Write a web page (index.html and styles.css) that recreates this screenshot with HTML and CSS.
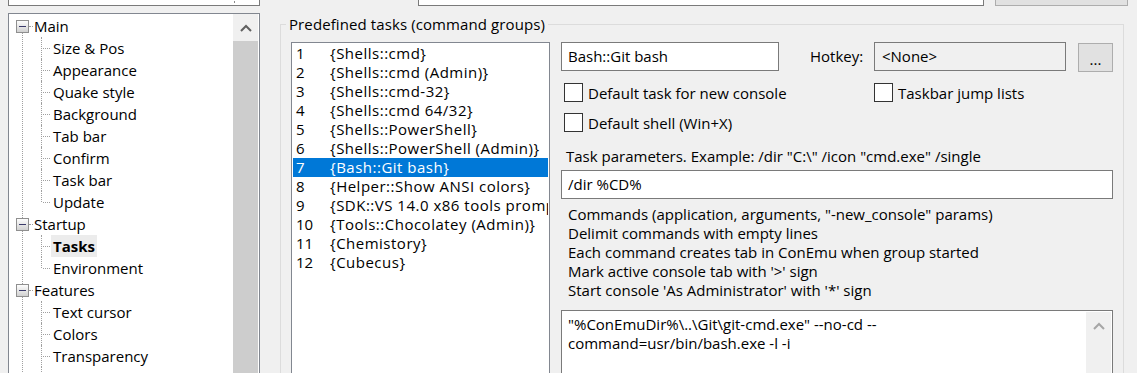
FILE: index.html
```html
<!DOCTYPE html>
<html lang="en">
<head>
    <meta charset="UTF-8">
    <title>Settings - Tasks</title>
    <link rel="stylesheet" href="styles.css">
</head>
<body>
    <div class="top">
        <div class="combo"><span class="combo-arrow"></span></div>
        <div class="search"></div>
        <div class="top-btn"></div>
    </div>

    <div class="main">
        <!-- settings tree -->
        <div class="tree">
            <ul class="roots">
                <li>
                    <div class="node">
                        <svg class="exp" width="13" height="13" viewBox="0 0 13 13">
                            <defs>
                                <linearGradient id="eg" x1="0" y1="0" x2="0" y2="1">
                                    <stop offset="0" stop-color="#ffffff"/>
                                    <stop offset="1" stop-color="#cfcfcf"/>
                                </linearGradient>
                            </defs>
                            <rect x="0.5" y="0.5" width="12" height="12" fill="url(#eg)" stroke="#8f8f8f"/>
                            <line x1="3" y1="6.5" x2="10" y2="6.5" stroke="#3a3a6a"/>
                        </svg>
                        <span class="label">Main</span>
                    </div>
                    <ul class="kids">
                        <li><span class="label">Size &amp; Pos</span></li>
                        <li><span class="label">Appearance</span></li>
                        <li><span class="label">Quake style</span></li>
                        <li><span class="label">Background</span></li>
                        <li><span class="label">Tab bar</span></li>
                        <li><span class="label">Confirm</span></li>
                        <li><span class="label">Task bar</span></li>
                        <li><span class="label">Update</span></li>
                    </ul>
                </li>
                <li>
                    <div class="node">
                        <svg class="exp" width="13" height="13" viewBox="0 0 13 13">
                            <rect x="0.5" y="0.5" width="12" height="12" fill="url(#eg)" stroke="#8f8f8f"/>
                            <line x1="3" y1="6.5" x2="10" y2="6.5" stroke="#3a3a6a"/>
                        </svg>
                        <span class="label">Startup</span>
                    </div>
                    <ul class="kids">
                        <li><span class="label current">Tasks</span></li>
                        <li><span class="label">Environment</span></li>
                    </ul>
                </li>
                <li>
                    <div class="node">
                        <svg class="exp" width="13" height="13" viewBox="0 0 13 13">
                            <rect x="0.5" y="0.5" width="12" height="12" fill="url(#eg)" stroke="#8f8f8f"/>
                            <line x1="3" y1="6.5" x2="10" y2="6.5" stroke="#3a3a6a"/>
                        </svg>
                        <span class="label">Features</span>
                    </div>
                    <ul class="kids">
                        <li><span class="label">Text cursor</span></li>
                        <li><span class="label">Colors</span></li>
                        <li><span class="label">Transparency</span></li>
                        <li><span class="label">Status bar</span></li>
                    </ul>
                </li>
            </ul>
            <div class="vscroll">
                <div class="vs-btn">
                    <svg width="12" height="8" viewBox="0 0 12 8"><path d="M1 7 L6 2 L11 7" fill="none" stroke="#606060" stroke-width="2"/></svg>
                </div>
                <div class="vs-thumb"></div>
            </div>
        </div>

        <!-- tasks page -->
        <fieldset class="group">
            <legend>Predefined tasks (command groups)</legend>
            <div class="tasks">
                <div class="list">
                    <div class="row"><span class="num">1</span>{Shells::cmd}</div>
                    <div class="row"><span class="num">2</span>{Shells::cmd (Admin)}</div>
                    <div class="row"><span class="num">3</span>{Shells::cmd-32}</div>
                    <div class="row"><span class="num">4</span>{Shells::cmd 64/32}</div>
                    <div class="row"><span class="num">5</span>{Shells::PowerShell}</div>
                    <div class="row"><span class="num">6</span>{Shells::PowerShell (Admin)}</div>
                    <div class="row selected"><span class="num">7</span>{Bash::Git bash}</div>
                    <div class="row"><span class="num">8</span>{Helper::Show ANSI colors}</div>
                    <div class="row"><span class="num">9</span>{SDK::VS 14.0 x86 tools prompt}</div>
                    <div class="row"><span class="num">10</span>{Tools::Chocolatey (Admin)}</div>
                    <div class="row"><span class="num">11</span>{Chemistory}</div>
                    <div class="row"><span class="num">12</span>{Cubecus}</div>
                </div>

                <div class="editor">
                    <div class="line-1">
                        <div class="edit name">Bash::Git bash</div>
                        <span class="hotkey-label">Hotkey:</span>
                        <div class="edit hotkey">&lt;None&gt;</div>
                        <div class="dots">...</div>
                    </div>
                    <div class="line-checks">
                        <label class="check first-col"><span class="box"></span>Default task for new console</label>
                        <label class="check"><span class="box"></span>Taskbar jump lists</label>
                    </div>
                    <div class="line-checks second">
                        <label class="check"><span class="box"></span>Default shell (Win+X)</label>
                    </div>
                    <div class="param-label">Task parameters. Example: /dir "C:\" /icon "cmd.exe" /single</div>
                    <div class="edit params">/dir %CD%</div>
                    <div class="hints">
                        Commands (application, arguments, "-new_console" params)<br>
                        Delimit commands with empty lines<br>
                        Each command creates tab in ConEmu when group started<br>
                        Mark active console tab with '&gt;' sign<br>
                        Start console 'As Administrator' with '*' sign
                    </div>
                    <div class="commands">
                        <div class="cmd-text">"%ConEmuDir%\..\Git\git-cmd.exe" --no-cd --<br>command=usr/bin/bash.exe -l -i</div>
                        <div class="vscroll light">
                            <div class="vs-btn">
                                <svg width="12" height="8" viewBox="0 0 12 8"><path d="M1 7 L6 2 L11 7" fill="none" stroke="#a6a6a6" stroke-width="2"/></svg>
                            </div>
                        </div>
                    </div>
                </div>
            </div>
        </fieldset>
    </div>
</body>
</html>
```

FILE: styles.css
```css
body {
    margin: 0;
    width: 1137px;
    height: 373px;
    overflow: hidden;
    background: #f0f0f0;
    font-family: "Open Sans", "Liberation Sans", sans-serif;
    font-size: 15px;
    color: #000;
}
ul {
    list-style: none;
    margin: 0;
    padding: 0;
}

/* controls cut off at the top edge */
.top {
    display: flex;
    align-items: flex-end;
    height: 6px;
    overflow: hidden;
    padding-left: 8px;
}
.combo, .search {
    height: 28px;
    box-sizing: border-box;
    border: 1px solid #7a7a7a;
    background: #fff;
}
.combo {
    width: 252px;
    display: flex;
    align-items: flex-end;
    justify-content: flex-end;
}
.combo-arrow {
    width: 1px;
    height: 2px;
    background: #8a8a8a;
    margin: 0 24px 2px 0;
}
.search {
    width: 566px;
    margin-left: 158px;
}
.top-btn {
    width: 133px;
    height: 28px;
    box-sizing: border-box;
    margin-left: 11px;
    background: #e1e1e1;
    border: 1px solid #adadad;
}

.main {
    display: flex;
    align-items: flex-start;
    margin-top: 7px;
    padding-left: 8px;
}

/* tree */
.tree {
    display: flex;
    width: 252px;
    height: 420px;
    box-sizing: border-box;
    border: 1px solid #828790;
    background: #fff;
}
.roots {
    flex: 1;
    padding-top: 1px;
}
.roots > li {
    position: relative;
}
.roots > li::before {
    content: "";
    position: absolute;
    left: 13px;
    top: 11px;
    bottom: -11px;
    border-left: 1px dotted #a0a0a0;
}
.node {
    position: relative;
    z-index: 1;
    display: flex;
    align-items: center;
    height: 22px;
    padding-left: 7px;
}
.exp {
    display: block;
    flex: none;
    background: #fff;
}
.node .label {
    margin-left: 3px;
}
.node::after {
    content: "";
    position: absolute;
    left: 20px;
    top: 11px;
    width: 4px;
    border-top: 1px dotted #a0a0a0;
}
.label {
    display: inline-block;
    height: 22px;
    line-height: 22px;
    padding: 0 2px;
    white-space: nowrap;
}
.label.current {
    font-weight: bold;
    background: #ececec;
}
.kids li {
    position: relative;
    height: 22px;
    padding-left: 42px;
}
.kids li::before {
    content: "";
    position: absolute;
    left: 32px;
    top: 0;
    bottom: 0;
    border-left: 1px dotted #a0a0a0;
}
.kids li:last-child::before {
    bottom: 11px;
}
.kids li::after {
    content: "";
    position: absolute;
    left: 34px;
    top: 11px;
    width: 7px;
    border-top: 1px dotted #a0a0a0;
}

.vscroll {
    width: 25px;
    flex: none;
    margin-right: 1px;
    background: #f0f0f0;
}
.vs-btn {
    height: 27px;
    display: flex;
    align-items: center;
    justify-content: center;
}
.vs-btn svg {
    display: block;
}
.vs-thumb {
    height: 400px;
    background: #cdcdcd;
}

/* group box */
.group {
    margin: 2px 0 0 20px;
    padding: 9px 10px 0 10px;
    width: 844px;
    height: 420px;
    box-sizing: border-box;
    min-width: 0;
    border: 1px solid #dcdcdc;
}
.group legend {
    margin-left: -5px;
    padding: 0 3px;
    line-height: 18px;
    letter-spacing: 0.1px;
}
.tasks {
    display: flex;
    align-items: flex-start;
}
.list {
    width: 259px;
    height: 400px;
    box-sizing: border-box;
    flex: none;
    border: 1px solid #828790;
    background: #fff;
    padding: 1px 1px 0 1px;
    overflow: hidden;
}
.row {
    height: 19px;
    line-height: 19px;
    padding-left: 3px;
    white-space: nowrap;
    overflow: hidden;
    letter-spacing: 0.5px;
}
.row.selected {
    background: #0078d7;
    color: #fff;
}
.num {
    display: inline-block;
    width: 34px;
    letter-spacing: 0;
}

.editor {
    width: 552px;
    margin-left: 11px;
}
.edit {
    box-sizing: border-box;
    height: 29px;
    line-height: 27px;
    border: 1px solid #7a7a7a;
    background: #fff;
    padding-left: 6px;
    white-space: nowrap;
}
.line-1 {
    display: flex;
    align-items: flex-start;
}
.name {
    width: 218px;
}
.hotkey-label {
    width: 95px;
    box-sizing: border-box;
    padding-left: 31px;
    line-height: 29px;
}
.hotkey {
    width: 192px;
    background: #f0f0f0;
    padding-left: 7px;
}
.dots {
    width: 35px;
    height: 29px;
    box-sizing: border-box;
    margin: 1px 0 0 12px;
    background: #e1e1e1;
    border: 1px solid #adadad;
    text-align: center;
    line-height: 30px;
}
.line-checks {
    display: flex;
    margin-top: 11px;
}
.check {
    display: flex;
    align-items: center;
    height: 19px;
    padding-left: 3px;
    white-space: nowrap;
}
.check.first-col {
    width: 310px;
    box-sizing: border-box;
}
.box {
    width: 19px;
    height: 19px;
    box-sizing: border-box;
    border: 1px solid #333;
    background: #fff;
    margin-right: 5px;
    flex: none;
}
.param-label {
    margin-top: 15px;
    padding-left: 5px;
    line-height: 19px;
    white-space: nowrap;
}
.params {
    margin-top: 4px;
}
.hints {
    margin-top: 6px;
    padding-left: 7px;
    line-height: 19px;
    white-space: nowrap;
}
.commands {
    display: flex;
    margin-top: 10px;
    height: 120px;
    box-sizing: border-box;
    border: 1px solid #7a7a7a;
    background: #fff;
    padding-top: 1px;
}
.cmd-text {
    flex: 1;
    padding: 3px 0 0 6px;
    line-height: 19px;
}
.commands .vscroll {
    margin-right: 1px;
}
```
